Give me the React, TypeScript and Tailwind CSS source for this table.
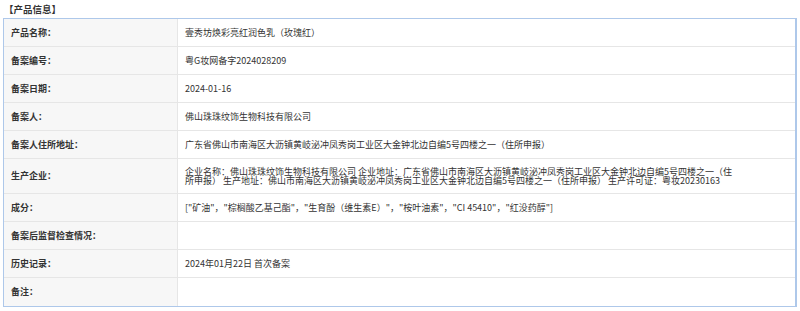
import React from "react";

type Row = { label: string; value: React.ReactNode; tall?: boolean };

const rows: Row[] = [
  { label: "产品名称：", value: "壹秀坊焕彩亮红润色乳（玫瑰红）" },
  { label: "备案编号：", value: "粤G妆网备字2024028209" },
  { label: "备案日期：", value: "2024-01-16" },
  { label: "备案人：", value: "佛山珠珠纹饰生物科技有限公司" },
  {
    label: "备案人住所地址：",
    value: "广东省佛山市南海区大沥镇黄岐泌冲凤秀岗工业区大金钟北边自编5号四楼之一（住所申报）",
  },
  {
    label: "生产企业：",
    tall: true,
    value:
      "企业名称：佛山珠珠纹饰生物科技有限公司 企业地址：广东省佛山市南海区大沥镇黄岐泌冲凤秀岗工业区大金钟北边自编5号四楼之一（住所申报） 生产地址：佛山市南海区大沥镇黄岐泌冲凤秀岗工业区大金钟北边自编5号四楼之一（住所申报） 生产许可证：粤妆20230163",
  },
  {
    label: "成分：",
    value: '["矿油"，"棕榈酸乙基己酯"，"生育酚（维生素E）"，"桉叶油素"，"CI 45410"，"红没药醇"]',
  },
  { label: "备案后监督检查情况：", value: "" },
  { label: "历史记录：", value: "2024年01月22日 首次备案" },
  { label: "备注：", value: "" },
];

const App = () => {
  return (
    <div
      className="w-[800px] h-[311px] bg-white px-[3px] text-[9px] text-[#333]"
      style={{ fontFamily: '"Microsoft YaHei", "Noto Sans CJK SC", sans-serif' }}
    >
      <div className="h-[18px] pl-px pt-[4px] font-bold leading-[11px] text-[9.5px]">【产品信息】</div>
      <div className="border border-[#aec8ea] border-r-2">
        {rows.map((row, i) => (
          <div
            key={row.label}
            className={`flex ${row.tall ? "h-[35px]" : "h-[28px]"} ${
              i < rows.length - 1 ? "border-b border-[#e6e6e6]" : ""
            }`}
          >
            <div className="w-[174px] shrink-0 bg-[#f7f7f7] border-r border-[#e6e6e6] flex items-center pl-[7px] font-bold">
              {row.label}
            </div>
            <div className="flex-1 flex items-center pl-[7px] pr-[62px]">
              <span className={row.tall ? "leading-[9.5px]" : ""}>{row.value}</span>
            </div>
          </div>
        ))}
      </div>
    </div>
  );
};

export default App;
